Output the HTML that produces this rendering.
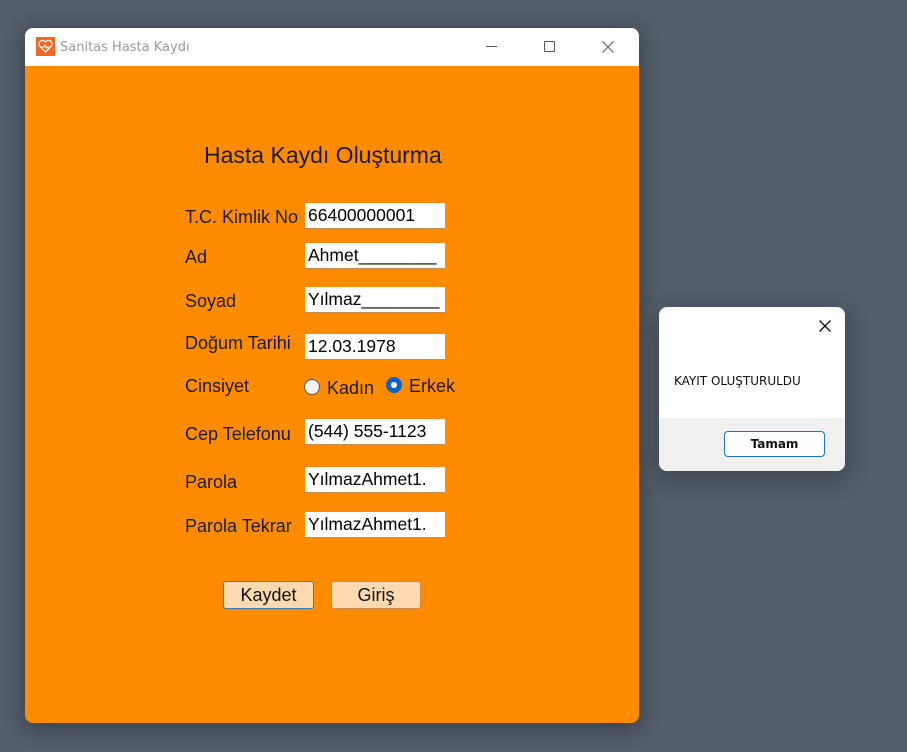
<!DOCTYPE html>
<html><head><meta charset="utf-8"><style>
*{margin:0;padding:0;box-sizing:border-box}
body{width:907px;height:752px;background:#525d6a;position:relative;overflow:hidden;font-family:"Liberation Sans",Arial,sans-serif}
.win{position:absolute;left:25px;top:28px;width:614px;height:695px;border-radius:8px;overflow:hidden;background:#ff8c00;box-shadow:0 4px 20px rgba(0,0,0,.35)}
.tb{position:absolute;left:0;top:0;width:614px;height:38px;background:#fff}
.ttl{position:absolute;left:35px;top:12px;color:#9a9a9a;font-family:"DejaVu Sans",sans-serif;font-size:13px}
.ico{position:absolute;left:11px;top:9px;width:19px;height:19px;background:#f26522}
.l{position:absolute;font-size:18px;color:#1a1a1a}
.i{position:absolute;left:280px;width:140px;height:26px;background:#fff;border-bottom:1px solid #c98a4a;font-size:17.5px;color:#000;padding:2px 0 0 3px;white-space:nowrap;overflow:hidden}
.btn{position:absolute;top:553px;height:28px;background:#ffdab0;border:1px solid #c98a4a;border-radius:3px;font-size:18px;color:#111;text-align:center;line-height:26px}
.dlg{position:absolute;left:659px;top:307px;width:186px;height:164px;background:#fff;border-radius:8px;overflow:hidden;box-shadow:0 6px 24px rgba(0,0,0,.3)}
</style></head><body>
<div class="win">
<div class="tb">
<div class="ico"><svg width="19" height="19" viewBox="0 0 19 19"><path d="M9.5 15 L3.5 9 A3 3 0 0 1 9.5 5 A3 3 0 0 1 15.5 9 Z" fill="none" stroke="#fff" stroke-width="1.3"/><path d="M5 10h3l1-2 1.5 3 1-1h2" fill="none" stroke="#fff" stroke-width="1"/></svg></div>
<div class="ttl">Sanitas Hasta Kaydı</div>
<div style="position:absolute;left:461px;top:18px;width:11px;height:1px;background:#555"></div>
<div style="position:absolute;left:519px;top:13px;width:11px;height:11px;border:1px solid #555;border-radius:1px"></div>
<svg style="position:absolute;left:577px;top:13px" width="12" height="12"><path d="M0.5 0.5L11.5 11.5M11.5 0.5L0.5 11.5" stroke="#555" stroke-width="1"/></svg>
</div>
<div class="l" style="left:179px;top:114px;font-size:23px">Hasta Kaydı Oluşturma</div>
<div class="l" style="left:160px;top:179px">T.C. Kimlik No</div>
<div class="i" style="top:175px">66400000001</div>
<div class="l" style="left:160px;top:219px">Ad</div>
<div class="i" style="top:215px">Ahmet________</div>
<div class="l" style="left:160px;top:263px">Soyad</div>
<div class="i" style="top:259px">Yılmaz________</div>
<div class="l" style="left:160px;top:305px">Doğum Tarihi</div>
<div class="i" style="top:306px">12.03.1978</div>
<div class="l" style="left:160px;top:348px">Cinsiyet</div>
<div style="position:absolute;left:279px;top:351px;width:16px;height:16px;border-radius:50%;background:#f4f4f4;border:1px solid #555"></div>
<div class="l" style="left:302px;top:350px">Kadın</div>
<div style="position:absolute;left:361px;top:349px;width:16px;height:16px;border-radius:50%;background:#0a64c8"><div style="position:absolute;left:5px;top:5px;width:6px;height:6px;border-radius:50%;background:#fff"></div></div>
<div class="l" style="left:384px;top:348px">Erkek</div>
<div class="l" style="left:160px;top:396px">Cep Telefonu</div>
<div class="i" style="top:391px">(544) 555-1123</div>
<div class="l" style="left:160px;top:444px">Parola</div>
<div class="i" style="top:439px">YılmazAhmet1.</div>
<div class="l" style="left:160px;top:488px">Parola Tekrar</div>
<div class="i" style="top:484px">YılmazAhmet1.</div>
<div class="btn" style="left:198px;width:91px;border-color:#3a7ec0">Kaydet</div>
<div class="btn" style="left:306px;width:90px">Giriş</div>
</div>
<div class="dlg">
<svg style="position:absolute;left:160px;top:13px" width="12" height="12"><path d="M0.5 0.5L11.5 11.5M11.5 0.5L0.5 11.5" stroke="#111" stroke-width="1.3"/></svg>
<div style="position:absolute;left:15px;top:67px;color:#111;font-family:'DejaVu Sans',sans-serif;font-size:12px">KAYIT OLUŞTURULDU</div>
<div style="position:absolute;left:0;top:111px;width:186px;height:53px;background:#f0f0f0"></div>
<div style="position:absolute;left:65px;top:124px;width:101px;height:26px;background:#fdfdfd;border:1px solid #1a73c8;border-radius:4px;text-align:center;line-height:24px;font-size:12px;font-weight:bold;color:#111;font-family:'DejaVu Sans',sans-serif">Tamam</div>
</div>
</body></html>
